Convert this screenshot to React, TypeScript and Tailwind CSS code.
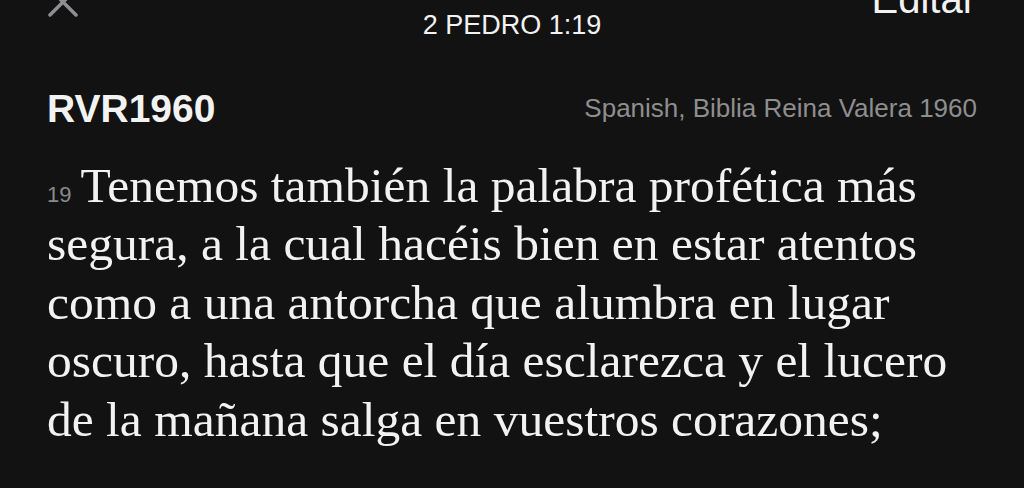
export default function App() {
  const lines = [
    "segura, a la cual hacéis bien en estar atentos",
    "como a una antorcha que alumbra en lugar",
    "oscuro, hasta que el día esclarezca y el lucero",
    "de la mañana salga en vuestros corazones;",
  ];

  return (
    <div className="h-[488px] w-full overflow-hidden bg-[#121212] text-[#f2f2f2]">
      {/* header, partly scrolled off the top */}
      <div className="-mt-[35px] grid grid-cols-[1fr_auto_1fr] px-[48px] font-['Liberation_Sans',Arial,sans-serif]">
        <div className="pt-[22px]">
          <svg width="30" height="30" viewBox="0 0 30 30" fill="none" stroke="#8e8e93" strokeWidth="3.5" strokeLinecap="round">
            <path d="M2 2L28 28M28 2L2 28" />
          </svg>
        </div>
        <div className="flex flex-col items-center">
          <div className="text-[34px] leading-[40px] font-semibold">Versículo</div>
          <div className="mt-[4px] text-[27px] leading-[32px]">2 PEDRO 1:19</div>
        </div>
        <div className="flex justify-end pt-[10px]">
          <span className="text-[40px] leading-[48px]">Editar</span>
        </div>
      </div>

      <div className="mt-[44px] flex items-start justify-between px-[47px] font-['Liberation_Sans',Arial,sans-serif]">
        <div className="text-[39px] leading-[48px] font-bold">RVR1960</div>
        <div className="mt-[6.5px] text-[26px] leading-[32px] text-[#8e8e8e]">Spanish, Biblia Reina Valera 1960</div>
      </div>

      <div className="mt-[23.5px] px-[47px] font-['Liberation_Serif','Times_New_Roman',serif] text-[49.5px] leading-[58.5px] whitespace-nowrap">
        <div className="h-[58.5px]">
          <span className="mr-[9px] align-baseline font-['Liberation_Sans',Arial,sans-serif] text-[22px] leading-none text-[#8a8a8a]">19</span>
          Tenemos también la palabra profética más
        </div>
        {lines.map((l) => (
          <div key={l}>{l}</div>
        ))}
      </div>
    </div>
  );
}
